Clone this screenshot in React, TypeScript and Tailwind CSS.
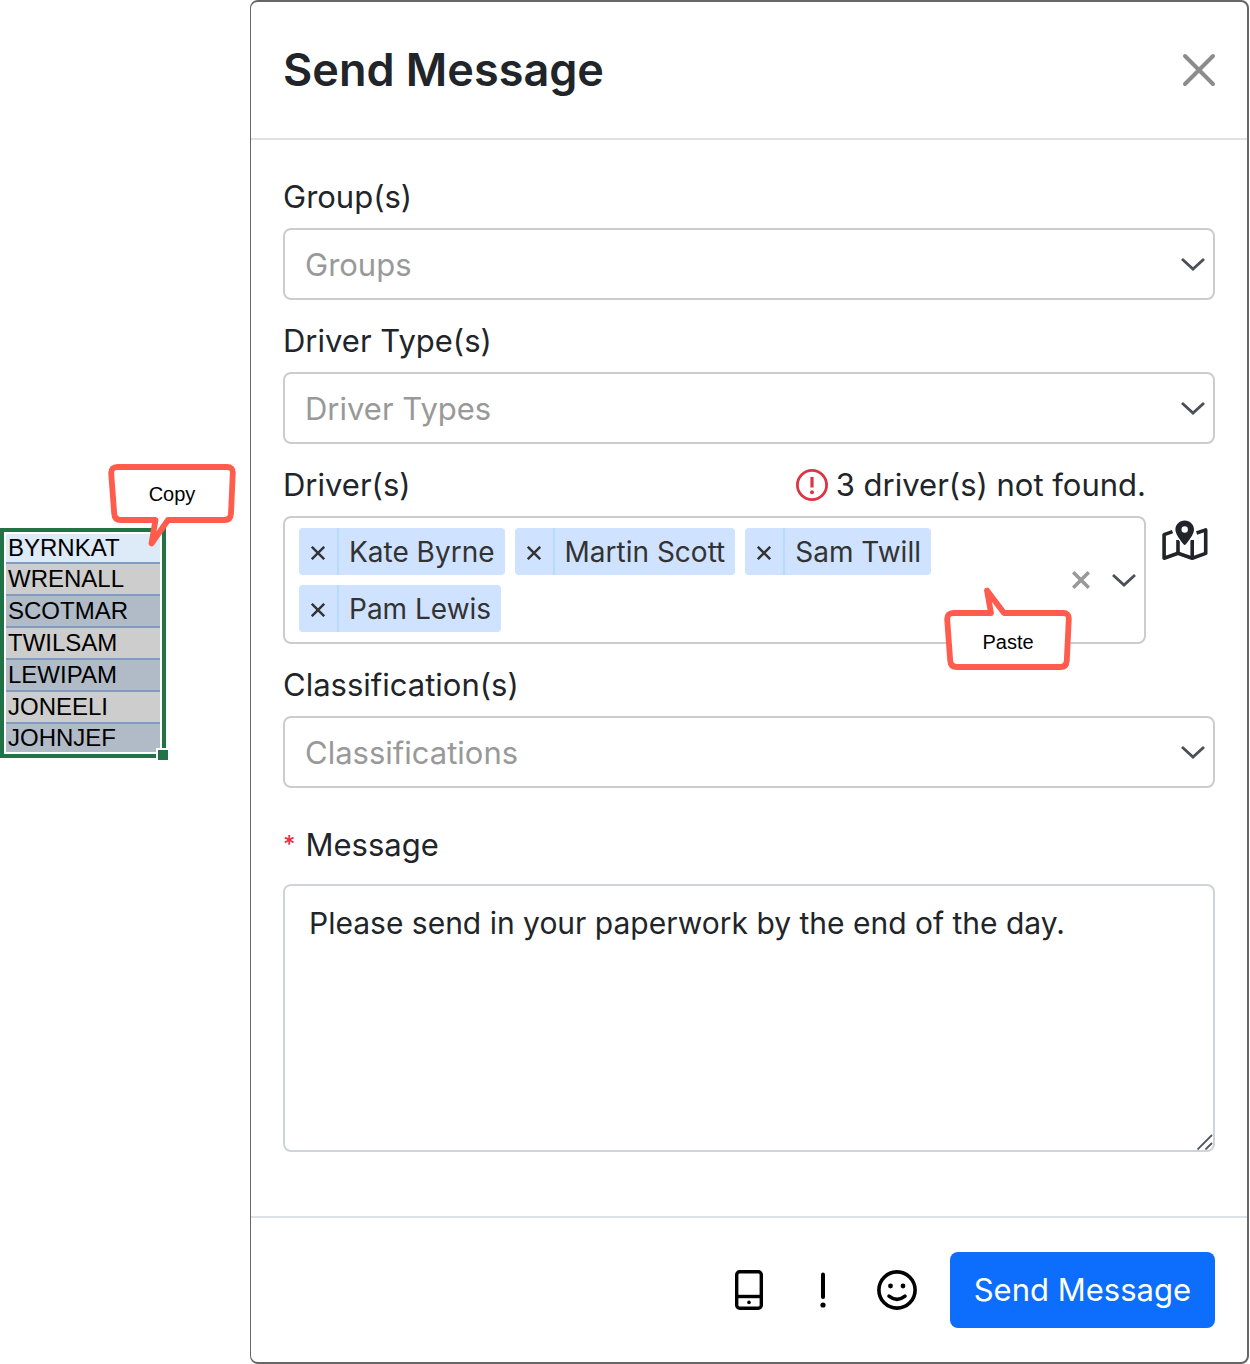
import { useState } from 'react';
import type { ReactNode } from 'react';

const driverCodes = ['BYRNKAT', 'WRENALL', 'SCOTMAR', 'TWILSAM', 'LEWIPAM', 'JONEELI', 'JOHNJEF'];

const rowColor = (index: number) => {
  if (index === 0) return 'bg-[#dcebf7]';
  return index % 2 === 1 ? 'bg-[#cdcdcd]' : 'bg-[#b0bbc7]';
};

const CloseIcon = () => (
  <svg viewBox="0 0 34 34" className="size-[34px]" stroke="#8c8c8c" strokeWidth="4" strokeLinecap="round">
    <path d="M3 3 31 31M31 3 3 31" />
  </svg>
);

const WarningIcon = () => (
  <svg viewBox="0 0 32 32" className="size-8" fill="none" stroke="#dc3545" strokeWidth="2.8">
    <circle cx="16" cy="16" r="14.6" />
    <path d="M16 8V18.5" strokeWidth="3.2" />
    <circle cx="16" cy="23.3" r="2" fill="#dc3545" stroke="none" />
  </svg>
);

const Chevron = () => (
  <svg viewBox="0 0 24 14" className="h-[14px] w-[24px]" fill="none" stroke="#495057" strokeWidth="2.8">
    <path d="M1 2 12 12 23 2" />
  </svg>
);

const MapPinIcon = () => (
  <svg viewBox="0 0 46 42" className="h-[42px] w-[46px]">
    <g fill="none" stroke="#212529" strokeWidth="3.6" strokeLinejoin="round">
      <path d="M10.5 11.6 2.1 14.6V38.3L16 33.2 30.2 38.3 43.7 33.4V9.9L34.6 13" />
      <path d="M16 20V33.5M30.2 20V38" />
    </g>
    <path
      fill="#212529"
      stroke="#fff"
      strokeWidth="2.4"
      paintOrder="stroke"
      d="M22.7.6c5.2 0 9.3 4 9.3 9.1 0 4-5 10.8-8.1 14.6a1.6 1.6 0 0 1-2.4 0C18.4 20.5 13.4 13.7 13.4 9.7c0-5.1 4.1-9.1 9.3-9.1Z"
    />
    <circle cx="22.7" cy="9.5" r="3.2" fill="#fff" />
  </svg>
);

const PhoneIcon = () => (
  <svg viewBox="0 0 28 40" className="h-10 w-7" fill="none" stroke="#000" strokeWidth="3.4">
    <rect x="1.700" y="1.7" width="24.6" height="36.6" rx="3" />
    <path d="M2 26.5H26" />
    <circle cx="14" cy="32.400" r="1.8" fill="#000" stroke="none" />
  </svg>
);

const ExclamationIcon = () => (
  <svg viewBox="0 0 8 40" className="h-10 w-2">
    <path d="M4 4.500V27" stroke="#000" strokeWidth="4" strokeLinecap="round" />
    <circle cx="4" cy="35" r="2.6" />
  </svg>
);

const SmileIcon = () => (
  <svg viewBox="0 0 40 40" className="size-10" fill="none" stroke="#000" strokeWidth="3.6" strokeLinecap="round">
    <circle cx="20" cy="20" r="18.1" />
    <path d="M12 26.2Q20 32.600 28 26.2" />
    <circle cx="13.5" cy="16" r="2.4" fill="#000" stroke="none" />
    <circle cx="26" cy="16" r="2.4" fill="#000" stroke="none" />
  </svg>
);

const Callout = ({ text, path, textClass }: { text: string; path: string; textClass: string }) => (
  <div className="relative h-[84px] w-[128px]">
    <svg viewBox="0 0 128 84" className="absolute inset-0 size-full">
      <path d={path} fill="#fff" stroke="#ff5c4d" strokeWidth="5.800" strokeLinejoin="round" />
    </svg>
    <span className={`absolute inset-x-0 text-center font-['Liberation_Sans',Arial,sans-serif] text-xl text-black ${textClass}`}>
      {text}
    </span>
  </div>
);

const Field = ({ id, label, children }: { id: string; label: string; children: ReactNode }) => (
  <div className="mb-4">
    <label htmlFor={id} className="mb-[6px] block w-fit">
      {label}
    </label>
    {children}
  </div>
);

const SelectBox = ({ id, placeholder }: { id: string; placeholder: string }) => (
  <div className="relative">
    <select
      id={id}
      className="block h-[72px] w-full appearance-none rounded-lg border-2 border-[#ccc] bg-white px-5 pt-[2px] text-[#999] outline-none"
    >
      <option>{placeholder}</option>
    </select>
    <span className="pointer-events-none absolute inset-y-0 right-[10px] flex items-center">
      <Chevron />
    </span>
  </div>
);

const App = () => {
  const [drivers, setDrivers] = useState(['Kate Byrne', 'Martin Scott', 'Sam Twill', 'Pam Lewis']);
  const [message, setMessage] = useState('Please send in your paperwork by the end of the day.');

  return (
    <div className="flex min-h-screen bg-white pr-px font-['Inter',sans-serif] text-[31px] leading-[50px] text-[#212529]">
      <aside className="w-[250px] shrink-0 pt-[528px]">
        <div className="relative w-[166px] border-4 border-[#217346] bg-white p-[2px]">
          <table className="w-full border-separate border-spacing-0 font-['Liberation_Sans',Arial,sans-serif] text-2xl text-black">
            <tbody>
              {driverCodes.map((code, i) => (
                <tr key={code} className={`group ${rowColor(i)}`}>
                  <td className="border-b-2 border-[#7f9cbc] p-0 pl-[2px] leading-[30px] group-first:leading-[28px] group-last:border-b-0 group-last:leading-[28px]">
                    {code}
                  </td>
                </tr>
              ))}
            </tbody>
          </table>
          <span className="absolute -right-[6px] -bottom-[6px] size-3 border-t-2 border-l-2 border-white bg-[#217346]" />
          <div className="absolute -top-[68px] left-[104px]">
            <Callout
              text="Copy"
              textClass="top-4"
              path="M9.500 3H119Q125 3 124.800 9L123 49.500Q122.600 56 116.500 56H60L43.500 79.500L47.500 56H13Q6.500 56 6.200 49.500L3.200 9.500Q3 3 9.500 3Z"
            />
          </div>
        </div>
      </aside>

      <main className="flex min-w-0 flex-1 flex-col rounded-lg border-2 border-l border-[#666]">
        <header className="flex items-center justify-between border-b-2 border-[#dee2e6] px-8 py-8">
          <h1 className="text-[45px] leading-[72px] font-semibold">Send Message</h1>
          <button aria-label="Close" className="-mr-px">
            <CloseIcon />
          </button>
        </header>

        <section className="flex-1 px-8 pt-8 pb-16">
          <Field id="groups" label="Group(s)">
            <SelectBox id="groups" placeholder="Groups" />
          </Field>
          <Field id="types" label="Driver Type(s)">
            <SelectBox id="types" placeholder="Driver Types" />
          </Field>

          <div className="mb-4 flex items-start gap-4">
            <div className="min-w-0 flex-1">
              <div className="mb-[6px] flex justify-between">
                <label htmlFor="drivers">Driver(s)</label>
                <p className="flex items-center gap-2">
                  <WarningIcon />3 driver(s) not found.
                </p>
              </div>
              <div className="relative flex items-center rounded-lg border-2 border-[#ccc] py-[10px] pr-2 pl-[14px]">
                <div className="flex min-w-0 flex-1 flex-wrap gap-[10px] pr-24">
                  {drivers.map((name) => (
                    <span key={name} className="flex h-[47px] rounded-[4px] bg-[#cfe2ff] text-[28px] leading-[49px] text-[#333]">
                      <button
                        aria-label={`Remove ${name}`}
                        onClick={() => setDrivers(drivers.filter((d) => d !== name))}
                        className="flex w-10 items-center justify-center border-r-2 border-[#b8daff] pt-[3px]"
                      >
                        <svg viewBox="0 0 14 14" className="size-[14px]" stroke="#333" strokeWidth="2.4">
                          <path d="M.8.8 13.2 13.2M13.2.8.8 13.2" />
                        </svg>
                      </button>
                      <span className="px-[10px]">{name}</span>
                    </span>
                  ))}
                  <input id="drivers" className="h-[47px] w-10 flex-1 outline-none" />
                </div>
                <button aria-label="Clear all" onClick={() => setDrivers([])} className="mr-[22px]">
                  <svg viewBox="0 0 18 18" className="size-[18px]" stroke="#999" strokeWidth="3.6">
                    <path d="M1.200 1.200 16.800 16.800M16.800 1.200 1.200 16.800" />
                  </svg>
                </button>
                <button aria-label="Open drivers">
                  <Chevron />
                </button>
                <div className="pointer-events-none absolute -bottom-[29px] left-full -ml-[200px]">
                  <Callout
                    text="Paste"
                    textClass="bottom-[15px]"
                    path="M9.500 26H47L43 3.500L60 26H119Q125 26 124.800 32L122.800 73.500Q122.500 80 116.500 80H13Q6.500 80 6.200 73.500L3.200 32.500Q3 26 9.500 26Z"
                  />
                </div>
              </div>
            </div>
            <button aria-label="Pick drivers on map" className="mt-[60px] mr-[7px]">
              <MapPinIcon />
            </button>
          </div>

          <Field id="classifications" label="Classification(s)">
            <SelectBox id="classifications" placeholder="Classifications" />
          </Field>

          <div className="mt-8">
            <label htmlFor="message" className="mb-[14px] flex w-fit gap-[10px]">
              <span className="text-2xl leading-[50px] font-medium text-[#dc3545]">*</span>
              Message
            </label>
            <div className="relative">
              <textarea
                id="message"
                value={message}
                onChange={(e) => setMessage(e.target.value)}
                className="block h-[268px] w-full resize-none rounded-lg border-2 border-[#ced4da] px-6 py-3 text-[30px] outline-none"
              />
              <svg viewBox="0 0 16 16" className="absolute right-[2px] bottom-[2px] size-4" stroke="#555" strokeWidth="1.8">
                <path d="M.5 15.5 15 1M8.5 15.5 15 9" />
              </svg>
            </div>
          </div>
        </section>

        <footer className="flex items-center justify-end border-t-2 border-[#dee2e6] px-8 py-[34px]">
          <button aria-label="Send to phone" className="mr-14">
            <PhoneIcon />
          </button>
          <button aria-label="High priority" className="mr-[50px]">
            <ExclamationIcon />
          </button>
          <button aria-label="Insert emoji" className="mr-[33px]">
            <SmileIcon />
          </button>
          <button className="h-[76px] rounded-lg bg-[#0d6efd] px-6 text-white">Send Message</button>
        </footer>
      </main>
    </div>
  );
};

export default App;
